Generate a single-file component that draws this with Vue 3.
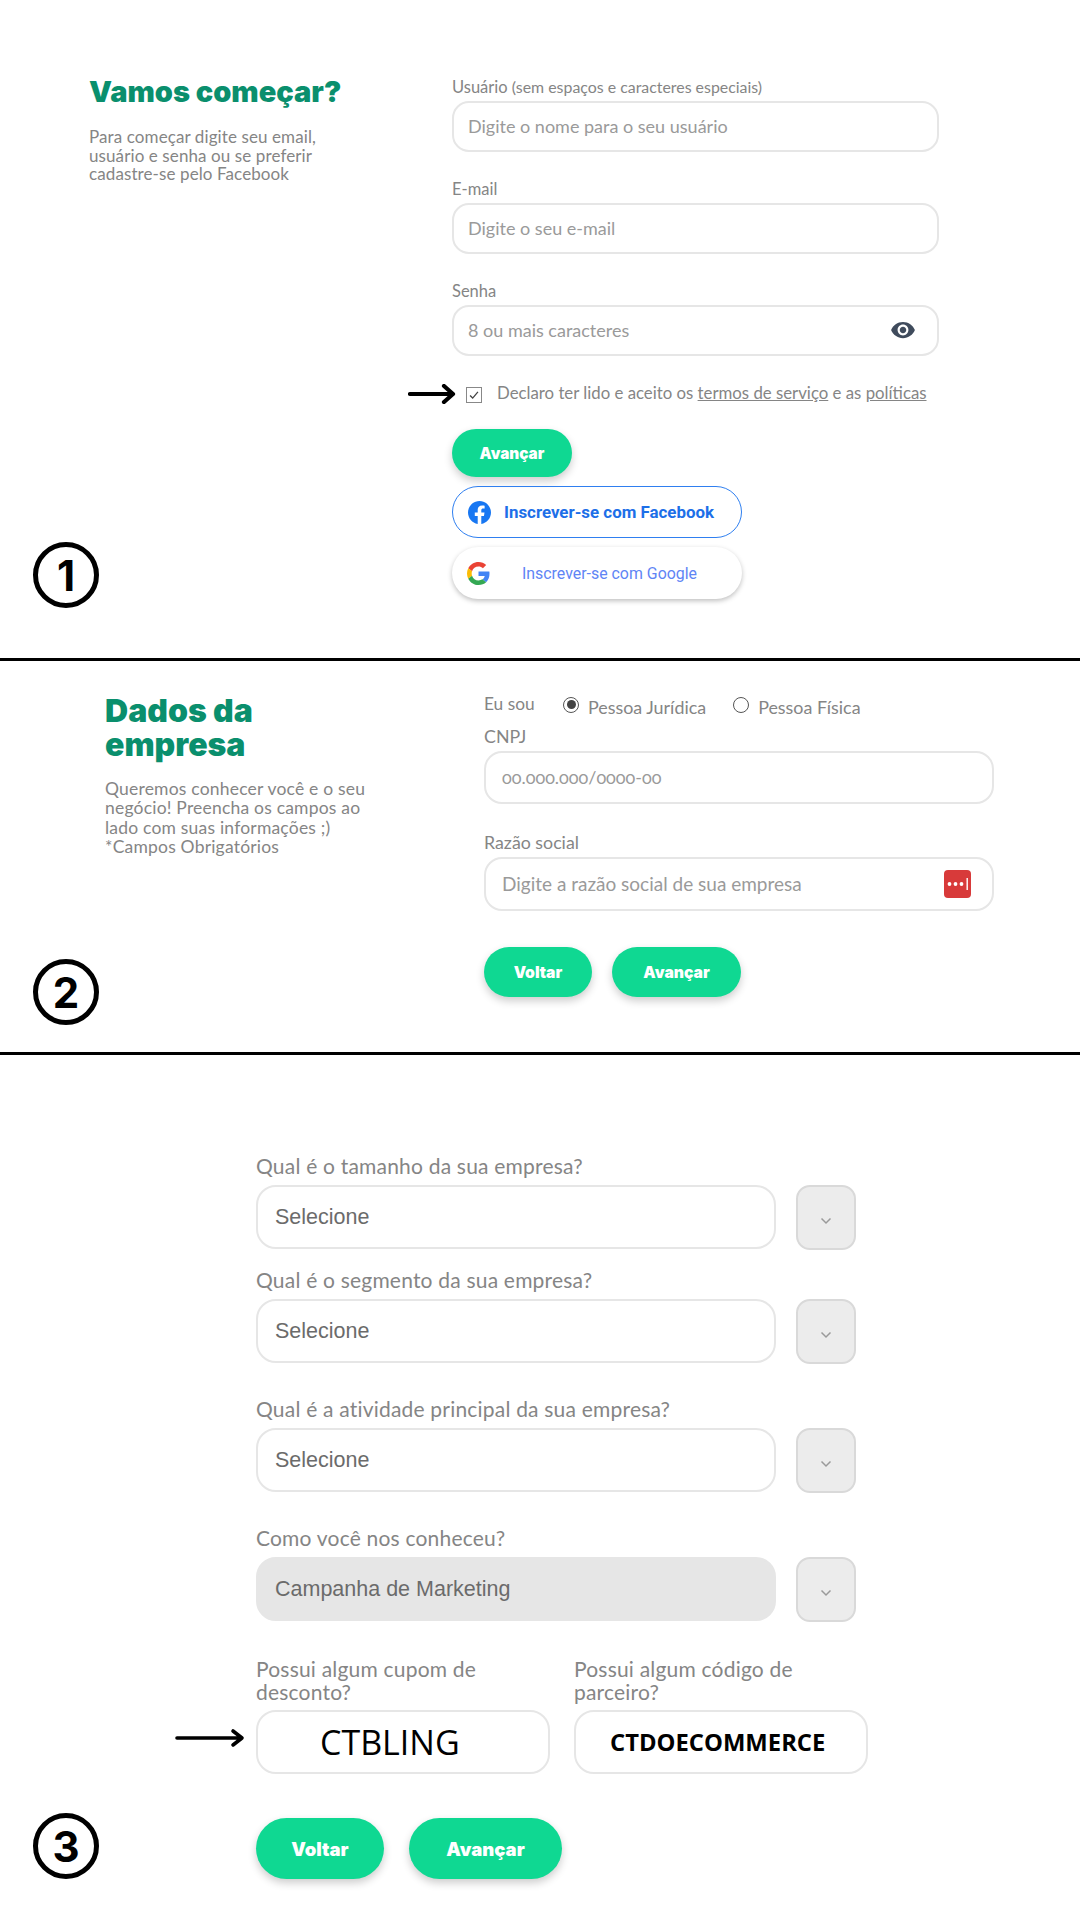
<script setup>
const selects = [
  { label: 'Qual é o tamanho da sua empresa?', value: 'Selecione', gap: 'first' },
  { label: 'Qual é o segmento da sua empresa?', value: 'Selecione', gap: 'near' },
  { label: 'Qual é a atividade principal da sua empresa?', value: 'Selecione', gap: 'far' },
  { label: 'Como você nos conheceu?', value: 'Campanha de Marketing', gap: 'last', filled: true },
];
</script>

<template>
  <div class="page">
    <section class="step one">
      <div class="intro">
        <h1 class="title">Vamos começar?</h1>
        <p class="desc">Para começar digite seu email,<br>usuário e senha ou se preferir<br>cadastre-se pelo Facebook</p>
      </div>
      <div class="form">
        <div class="field">
          <div class="label">Usuário <small>(sem espaços e caracteres especiais)</small></div>
          <div class="input"><span>Digite o nome para o seu usuário</span></div>
        </div>
        <div class="field">
          <div class="label">E-mail</div>
          <div class="input"><span>Digite o seu e-mail</span></div>
        </div>
        <div class="field">
          <div class="label">Senha</div>
          <div class="input">
            <span>8 ou mais caracteres</span>
            <svg class="eye" viewBox="0 0 24 24"><path fill="#3f4b5c" d="M12 4.5C7 4.5 2.73 7.61 1 12c1.73 4.39 6 7.5 11 7.5s9.27-3.11 11-7.5c-1.73-4.39-6-7.5-11-7.5zM12 17c-2.76 0-5-2.24-5-5s2.24-5 5-5 5 2.24 5 5-2.24 5-5 5zm0-8c-1.66 0-3 1.34-3 3s1.34 3 3 3 3-1.34 3-3-1.34-3-3-3z"/></svg>
          </div>
        </div>
        <div class="terms">
          <svg class="arrow small" viewBox="0 0 48 20"><path d="M2 10h43M36 2l9 8-9 8" fill="none" stroke="#000" stroke-width="4.2" stroke-linecap="round" stroke-linejoin="round"/></svg>
          <span class="check">
            <svg viewBox="0 0 16 16"><path d="M3.5 8.5l3 3 6-7" fill="none" stroke="#444" stroke-width="1.5"/></svg>
          </span>
          <span class="terms-text">Declaro ter lido e aceito os <u>termos de serviço</u> e as <u>políticas</u></span>
        </div>
        <div class="btn solo">Avançar</div>
        <div class="social fb">
          <svg viewBox="0 0 24 24"><path fill="#1877f2" d="M24 12.07C24 5.4 18.63 0 12 0S0 5.4 0 12.07c0 6.02 4.39 11.01 10.13 11.93v-8.44H7.08v-3.49h3.05V9.41c0-3.02 1.79-4.69 4.53-4.69 1.31 0 2.69.24 2.69.24v2.97h-1.52c-1.49 0-1.96.93-1.96 1.89v2.25h3.33l-.53 3.49h-2.8V24C19.61 23.08 24 18.09 24 12.07z"/></svg>
          <span>Inscrever-se com Facebook</span>
        </div>
        <div class="social google">
          <svg viewBox="0 0 48 48">
            <path fill="#EA4335" d="M24 9.5c3.54 0 6.71 1.22 9.21 3.6l6.85-6.85C35.9 2.38 30.47 0 24 0 14.62 0 6.51 5.38 2.56 13.22l7.98 6.19C12.43 13.72 17.74 9.5 24 9.5z"/>
            <path fill="#4285F4" d="M46.98 24.55c0-1.57-.15-3.09-.38-4.55H24v9.02h12.94c-.58 2.96-2.26 5.48-4.78 7.18l7.73 6c4.51-4.18 7.09-10.36 7.09-17.65z"/>
            <path fill="#FBBC05" d="M10.53 28.59c-.48-1.45-.76-2.99-.76-4.59s.27-3.14.76-4.59l-7.98-6.19C.92 16.46 0 20.12 0 24c0 3.88.92 7.54 2.56 10.78l7.97-6.19z"/>
            <path fill="#34A853" d="M24 48c6.48 0 11.93-2.13 15.89-5.81l-7.73-6c-2.15 1.45-4.92 2.3-8.16 2.3-6.26 0-11.57-4.22-13.47-9.91l-7.98 6.19C6.51 42.62 14.62 48 24 48z"/>
          </svg>
          <span>Inscrever-se com Google</span>
        </div>
      </div>
      <div class="badge">1</div>
    </section>

    <section class="step two">
      <div class="intro">
        <h1 class="title big">Dados da<br>empresa</h1>
        <p class="desc">Queremos conhecer você e o seu<br>negócio! Preencha os campos ao<br>lado com suas informações ;)<br>*Campos Obrigatórios</p>
      </div>
      <div class="form">
        <div class="kind">
          <span class="kind-label">Eu sou</span>
          <span class="radio on"></span><span class="radio-text">Pessoa Jurídica</span>
          <span class="radio"></span><span class="radio-text">Pessoa Física</span>
        </div>
        <div class="field cnpj">
          <div class="label">CNPJ</div>
          <div class="input"><span class="oldstyle">00.000.000/0000-00</span></div>
        </div>
        <div class="field">
          <div class="label">Razão social</div>
          <div class="input tall">
            <span>Digite a razão social de sua empresa</span>
            <svg class="dots" viewBox="0 0 27 28">
              <rect width="27" height="28" rx="4" fill="#d83a3a"/>
              <circle cx="5.5" cy="14" r="1.9" fill="#fff"/>
              <circle cx="11.5" cy="14" r="1.9" fill="#fff"/>
              <circle cx="17.5" cy="14" r="1.9" fill="#fff"/>
              <rect x="22.5" y="8" width="1.4" height="12" fill="#fff"/>
            </svg>
          </div>
        </div>
        <div class="actions">
          <div class="btn back">Voltar</div>
          <div class="btn next">Avançar</div>
        </div>
      </div>
      <div class="badge">2</div>
    </section>

    <section class="step three">
      <div v-for="s in selects" :key="s.label" class="pick" :class="s.gap">
        <div class="label">{{ s.label }}</div>
        <div class="pick-row">
          <div class="select" :class="{ filled: s.filled }">{{ s.value }}</div>
          <div class="caret">
            <svg viewBox="0 0 12 8"><path d="M1.5 1.5L6 6l4.5-4.5" fill="none" stroke="#9a9a9a" stroke-width="1.5"/></svg>
          </div>
        </div>
      </div>
      <div class="codes">
        <div class="code">
          <div class="label two-lines">Possui algum cupom de<br>desconto?</div>
          <div class="code-box"><span class="ctbling">CTBLING</span></div>
          <svg class="arrow large" viewBox="0 0 70 20"><path d="M2 10h65M58 3l9 7-9 7" fill="none" stroke="#000" stroke-width="3.6" stroke-linecap="round" stroke-linejoin="round"/></svg>
        </div>
        <div class="code">
          <div class="label two-lines">Possui algum código de<br>parceiro?</div>
          <div class="code-box"><span class="partner">CTDOECOMMERCE</span></div>
        </div>
      </div>
      <div class="actions final">
        <div class="btn back">Voltar</div>
        <div class="btn next">Avançar</div>
      </div>
      <div class="badge">3</div>
    </section>
  </div>
</template>

<style>
body {
  background: #fff;
}
</style>

<style scoped>
.page {
  width: 1080px;
  height: 1920px;
  overflow: hidden;
  font-family: "Lato", "Liberation Sans", sans-serif;
  color: #858585;
}
.step {
  position: relative;
  box-sizing: border-box;
  display: flex;
}
.one {
  height: 661px;
  border-bottom: 3px solid #000;
  padding: 0 0 0 89px;
}
.two {
  height: 394px;
  border-bottom: 3px solid #000;
  padding: 34px 0 0 105px;
}
.three {
  height: 865px;
  flex-direction: column;
  padding: 102px 0 0 256px;
}
.one .intro {
  width: 363px;
  padding-top: 74px;
}
.two .intro {
  width: 379px;
  margin-top: -1px;
}
.title {
  margin: 0;
  font-family: "Inter", "Lato", sans-serif;
  font-weight: 900;
  font-size: 29px;
  line-height: 36px;
  color: #0a8f6d;
}
.title.big {
  font-size: 32px;
  line-height: 34px;
}
.desc {
  margin: 18px 0 0;
  font-size: 17px;
  letter-spacing: 0.1px;
  line-height: 18.5px;
}
.two .desc {
  margin-top: 17px;
  font-size: 17.5px;
  letter-spacing: 0.2px;
  line-height: 19.3px;
}
.one .form {
  width: 487px;
  padding-top: 78px;
}
.two .form {
  width: 510px;
}
.field + .field {
  margin-top: 28px;
}
.label {
  height: 20px;
  line-height: 18px;
  font-size: 16.5px;
  margin-bottom: 3px;
  white-space: nowrap;
}
.label small {
  font-size: 15.9px;
}
.two .label {
  line-height: 19px;
  font-size: 17.8px;
  margin-bottom: 4px;
}
.input {
  box-sizing: border-box;
  height: 51px;
  display: flex;
  align-items: center;
  justify-content: space-between;
  padding: 0 15px 2px 14px;
  border: 2px solid #e6e6e6;
  border-radius: 17px;
  font-size: 18px;
  color: #9a9a9a;
  background: #fff;
}
.eye {
  width: 26px;
  height: 26px;
  margin-right: 6px;
}
.terms {
  position: relative;
  display: flex;
  align-items: center;
  height: 20px;
  margin-top: 28px;
  font-size: 16.8px;
  white-space: nowrap;
}
.terms-text {
  margin-top: -3px;
}
.check {
  box-sizing: border-box;
  width: 16px;
  height: 16px;
  margin: 2px 15px 0 14px;
  border: 1.5px solid #888;
  flex: none;
}
.check svg {
  display: block;
  width: 100%;
  height: 100%;
}
.arrow {
  position: absolute;
  display: block;
}
.arrow.small {
  width: 48px;
  height: 20px;
  left: -44px;
  top: 0;
}
.arrow.large {
  width: 70px;
  height: 20px;
  left: -81px;
  top: 71px;
}
.btn {
  display: flex;
  align-items: center;
  justify-content: center;
  border-radius: 26px;
  background: #0fd892;
  color: #fff;
  font-family: "Inter", "Lato", sans-serif;
  font-weight: 900;
  font-size: 15.3px;
  box-shadow: 0 4px 9px rgba(0, 0, 0, 0.2);
}
.solo {
  width: 120px;
  height: 48px;
  margin-top: 25px;
}
.social {
  box-sizing: border-box;
  width: 290px;
  height: 52px;
  display: flex;
  align-items: center;
  border-radius: 26px;
  font-family: "Roboto", "Liberation Sans", sans-serif;
  font-size: 16px;
  white-space: nowrap;
}
.social svg {
  width: 23px;
  height: 23px;
  flex: none;
}
.fb {
  margin-top: 9px;
  padding-left: 15px;
  border: 1.5px solid #2f7ff0;
  color: #1d6fe8;
  font-size: 16.9px;
  font-weight: 700;
}
.fb span {
  margin-left: 13px;
}
.google {
  margin-top: 9px;
  padding-left: 15px;
  color: #5f85f5;
  font-size: 15.9px;
  box-shadow: 0 2px 5px rgba(0, 0, 0, 0.25);
}
.google span {
  margin-left: 32px;
}
.kind {
  display: flex;
  align-items: center;
  height: 20px;
  font-size: 17.9px;
  white-space: nowrap;
}
.kind-label {
  width: 79px;
  margin-top: -4px;
  font-size: 17.3px;
}
.radio {
  box-sizing: border-box;
  width: 16px;
  height: 16px;
  border: 1.5px solid #555;
  border-radius: 50%;
  position: relative;
  margin-top: -1px;
}
.radio.on::after {
  content: "";
  position: absolute;
  inset: 2.5px;
  border-radius: 50%;
  background: #444;
}
.radio-text {
  margin: 4px 27px 0 9px;
}
.field.cnpj {
  margin-top: 12px;
}
.two .field + .field {
  margin-top: 29px;
}
.two .input {
  height: 53px;
  padding: 0 16px 1px;
  border-radius: 18px;
}
.two .input.tall {
  height: 54px;
  font-size: 19px;
}
.oldstyle {
  font-variant-numeric: oldstyle-nums;
}
.dots {
  width: 27px;
  height: 28px;
  margin-right: 5px;
}
.actions {
  display: flex;
  margin-top: 36px;
}
.actions .btn {
  height: 50px;
  font-size: 15.7px;
}
.actions .back {
  width: 108px;
}
.actions .next {
  width: 129px;
  margin-left: 20px;
}
.pick {
  width: 600px;
}
.pick.near {
  margin-top: 21px;
}
.pick.far {
  margin-top: 36px;
}
.pick.last {
  margin-top: 36px;
}
.pick .label {
  font-size: 21px;
  letter-spacing: 0.2px;
  margin-bottom: 8px;
}
.pick-row {
  display: flex;
  gap: 20px;
}
.select {
  box-sizing: border-box;
  width: 520px;
  height: 64px;
  display: flex;
  align-items: center;
  padding: 0 17px;
  border: 2px solid #e6e6e6;
  border-radius: 20px;
  font-family: "Liberation Sans", sans-serif;
  font-size: 21.5px;
  color: #6b6b6b;
}
.select.filled {
  background: #e6e6e6;
}
.caret {
  box-sizing: border-box;
  width: 60px;
  height: 65px;
  display: flex;
  align-items: center;
  justify-content: center;
  padding-top: 6px;
  border: 2px solid #d9d9d9;
  border-radius: 14px;
  background: #ececec;
}
.caret svg {
  width: 12px;
  height: 8px;
}
.codes {
  display: flex;
  gap: 24px;
  margin-top: 35px;
}
.code {
  position: relative;
  width: 294px;
}
.two-lines {
  height: 46px;
  line-height: 23px;
  font-size: 21px;
  letter-spacing: 0.2px;
  white-space: normal;
  margin-bottom: 7px;
}
.code-box {
  box-sizing: border-box;
  height: 64px;
  display: flex;
  align-items: center;
  border: 2px solid #e6e6e6;
  border-radius: 20px;
  color: #000;
  font-family: "Open Sans", sans-serif;
  white-space: nowrap;
}
.ctbling {
  margin-left: 62px;
  font-size: 34px;
}
.partner {
  margin-left: 34px;
  font-size: 23.8px;
  font-weight: 700;
}
.actions.final {
  margin-top: 44px;
}
.final .btn {
  height: 61px;
  border-radius: 31px;
  font-size: 18.5px;
}
.final .back {
  width: 128px;
}
.final .next {
  width: 153px;
  margin-left: 25px;
}
.badge {
  position: absolute;
  left: 33px;
  box-sizing: border-box;
  width: 66px;
  height: 66px;
  display: flex;
  align-items: center;
  justify-content: center;
  border: 5px solid #000;
  border-radius: 50%;
  color: #000;
  font-family: "Inter", sans-serif;
  font-weight: 700;
  font-size: 42px;
}
.one .badge {
  top: 542px;
}
.two .badge {
  top: 298px;
}
.three .badge {
  top: 758px;
}
</style>
